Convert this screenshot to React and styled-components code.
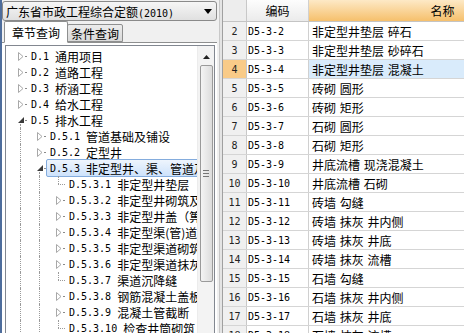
import React from "react";
import styled, { createGlobalStyle, css } from "styled-components";

const GlobalStyle = createGlobalStyle`
  html, body {
    margin: 0;
    padding: 0;
    width: 464px;
    height: 333px;
    overflow: hidden;
    background: #f0f0f0;
  }
  body {
    font-family: "Noto Sans CJK SC", "Noto Sans", sans-serif;
    font-size: 12px;
    color: #000;
  }
`;

const treeItems = [
  { code: "D.1", name: "通用项目", level: 0, state: "closed" },
  { code: "D.2", name: "道路工程", level: 0, state: "closed" },
  { code: "D.3", name: "桥涵工程", level: 0, state: "closed" },
  { code: "D.4", name: "给水工程", level: 0, state: "closed" },
  { code: "D.5", name: "排水工程", level: 0, state: "open" },
  { code: "D.5.1", name: "管道基础及铺设", level: 1, state: "closed" },
  { code: "D.5.2", name: "定型井", level: 1, state: "closed" },
  { code: "D.5.3", name: "非定型井、渠、管道及构筑物", level: 1, state: "open", selected: true },
  { code: "D.5.3.1", name: "非定型井垫层", level: 2, state: "leaf" },
  { code: "D.5.3.2", name: "非定型井砌筑及抹灰", level: 2, state: "closed" },
  { code: "D.5.3.3", name: "非定型井盖（箅）制作", level: 2, state: "closed" },
  { code: "D.5.3.4", name: "非定型渠(管)道基础", level: 2, state: "closed" },
  { code: "D.5.3.5", name: "非定型渠道砌筑", level: 2, state: "closed" },
  { code: "D.5.3.6", name: "非定型渠道抹灰", level: 2, state: "closed" },
  { code: "D.5.3.7", name: "渠道沉降缝", level: 2, state: "leaf" },
  { code: "D.5.3.8", name: "钢筋混凝土盖板", level: 2, state: "closed" },
  { code: "D.5.3.9", name: "混凝土管截断", level: 2, state: "closed" },
  { code: "D.5.3.10", name: "检查井筒砌筑", level: 2, state: "leaf" },
];

const rows = [
  [2, "D5-3-2", "非定型井垫层 碎石"],
  [3, "D5-3-3", "非定型井垫层 砂碎石"],
  [4, "D5-3-4", "非定型井垫层 混凝土"],
  [5, "D5-3-5", "砖砌 圆形"],
  [6, "D5-3-6", "砖砌 矩形"],
  [7, "D5-3-7", "石砌 圆形"],
  [8, "D5-3-8", "石砌 矩形"],
  [9, "D5-3-9", "井底流槽 现浇混凝土"],
  [10, "D5-3-10", "井底流槽 石砌"],
  [11, "D5-3-11", "砖墙 勾缝"],
  [12, "D5-3-12", "砖墙 抹灰 井内侧"],
  [13, "D5-3-13", "砖墙 抹灰 井底"],
  [14, "D5-3-14", "砖墙 抹灰 流槽"],
  [15, "D5-3-15", "石墙 勾缝"],
  [16, "D5-3-16", "石墙 抹灰 井内侧"],
  [17, "D5-3-17", "石墙 抹灰 井底"],
  [18, "D5-3-18", "石墙 抹灰 流槽"],
];

const ClosedArrow = () => (
  <svg width="6" height="9" viewBox="0 0 6 9">
    <polygon points="0.5,0.5 5,4.5 0.5,8.5" fill="#fff" stroke="#a8a8a8" />
  </svg>
);

const OpenArrow = () => (
  <svg width="6" height="6" viewBox="0 0 6 6">
    <polygon points="6,0 6,6 0,6" fill="#3a3a3a" />
  </svg>
);

const App = () => {
  return (
    <>
      <GlobalStyle />
      <Frame>
        <LeftPane>
          <Combo>
            <span>
              广东省市政工程综合定额<Code>(2010)</Code>
            </span>
            <ComboArrow>
              <svg width="8" height="5" viewBox="0 0 8 5">
                <polygon points="0,0 8,0 4,5" fill="#000" />
              </svg>
            </ComboArrow>
          </Combo>
          <TabStrip>
            <Tab $active>章节查询</Tab>
            <Tab>条件查询</Tab>
          </TabStrip>
          <TabPanel>
            <TreeBox>
              <TreeList>
                {treeItems.map((item) => (
                  <TreeRow key={item.code}>
                    {item.level > 0 && <Guide />}
                    {item.level > 1 && <Guide />}
                    <Expander $state={item.state}>
                      {item.state === "closed" && <ClosedArrow />}
                      {item.state === "open" && <OpenArrow />}
                      {item.state !== "leaf" && <Dot />}
                    </Expander>
                    <Label $selected={item.selected}>
                      <Code>{item.code}</Code>
                      <span>{item.name}</span>
                    </Label>
                  </TreeRow>
                ))}
              </TreeList>
              <ScrollBar>
                <ScrollButton>
                  <svg width="7" height="4" viewBox="0 0 7 4">
                    <polygon points="0,4 7,4 3.5,0" fill="#222" />
                  </svg>
                </ScrollButton>
                <Thumb>
                  <Grip />
                </Thumb>
              </ScrollBar>
            </TreeBox>
          </TabPanel>
        </LeftPane>
        <Splitter />
        <Grid>
          <GridRow $header>
            <NumCell $header />
            <CodeCell $header>编码</CodeCell>
            <NameCell $header>名称</NameCell>
          </GridRow>
          {rows.map(([num, code, name]) => (
            <GridRow key={num}>
              <NumCell $current={num === 4}>{num}</NumCell>
              <CodeCell>{code}</CodeCell>
              <NameCell $current={num === 4}>{name}</NameCell>
            </GridRow>
          ))}
        </Grid>
      </Frame>
    </>
  );
};

const Frame = styled.div`
  display: flex;
  width: 464px;
  height: 333px;
  overflow: hidden;
`;

const LeftPane = styled.div`
  width: 219px;
  flex: none;
  box-sizing: border-box;
  display: flex;
  flex-direction: column;
  border-left: 2px solid #4e6d9c;
  padding-right: 2px;
  background: #f0f0f0;
`;

const Combo = styled.div`
  margin-top: 1px;
  height: 20px;
  box-sizing: border-box;
  display: flex;
  align-items: center;
  justify-content: space-between;
  padding: 0 4px 0 3px;
  border: 1px solid #8a8a8a;
  border-radius: 3px;
  background: linear-gradient(#f6f6f6, #e0e0e0);
  white-space: nowrap;
`;

const ComboArrow = styled.span`
  display: flex;
  align-items: center;
`;

const TabStrip = styled.div`
  display: flex;
  align-items: flex-end;
  height: 22px;
  padding-left: 2px;
  margin-bottom: -1px;
  position: relative;
  z-index: 1;
`;

const Tab = styled.div`
  box-sizing: border-box;
  border: 1px solid #8e8f8f;
  border-radius: 2px 2px 0 0;
  display: flex;
  align-items: center;
  white-space: nowrap;
  ${({ $active }) =>
    $active
      ? css`
          height: 22px;
          padding: 0 7px;
          background: #fff;
          border-bottom-color: #fff;
        `
      : css`
          height: 18px;
          padding: 0 3px;
          margin-left: -1px;
          margin-bottom: 1px;
          background: linear-gradient(#ececec, #d9d9d9);
        `}
`;

const TabPanel = styled.div`
  flex: 1;
  display: flex;
  min-height: 0;
  border-top: 1px solid #8e8f8f;
  padding: 2px 2px 0 3px;
  background: #fff;
`;

const TreeBox = styled.div`
  flex: 1;
  display: flex;
  min-width: 0;
  border: 1px solid #828790;
  border-bottom: none;
  background: #fff;
`;

const TreeList = styled.div`
  flex: 1;
  min-width: 0;
  overflow: hidden;
  padding: 2px 0 0 10px;
`;

const TreeRow = styled.div`
  display: flex;
  align-items: stretch;
  height: 16px;
  white-space: nowrap;
`;

const Guide = styled.span`
  width: 19px;
  flex: none;
  position: relative;
  &::before {
    content: "";
    position: absolute;
    left: 4px;
    top: 0;
    bottom: 0;
    border-left: 1px dotted #9a9a9a;
  }
`;

const Expander = styled.span`
  width: 11px;
  flex: none;
  display: flex;
  align-items: center;
  padding-left: 2px;
  box-sizing: border-box;
  position: relative;
  ${({ $state }) =>
    $state === "leaf" &&
    css`
      &::before {
        content: "";
        position: absolute;
        left: 4px;
        top: 0;
        height: 8px;
        border-left: 1px dotted #9a9a9a;
      }
      &::after {
        content: "";
        position: absolute;
        left: 4px;
        right: 0;
        top: 8px;
        border-top: 1px dotted #9a9a9a;
      }
    `}
  ${({ $state }) =>
    $state === "open" &&
    css`
      &::after {
        content: "";
        position: absolute;
        left: 4px;
        top: 12px;
        bottom: 0;
        border-left: 1px dotted #9a9a9a;
      }
    `}
`;

const Dot = styled.span`
  width: 2px;
  height: 1px;
  margin-left: 1px;
  background: #8a8a8a;
`;

const Label = styled.span`
  display: flex;
  align-items: center;
  gap: 6px;
  padding: 0 3px;
  border: 1px solid transparent;
  border-radius: 2px;
  ${({ $selected }) =>
    $selected &&
    css`
      margin: -1px 0;
      background: linear-gradient(#eef5fd, #cde2fb);
      border-color: #84acdd;
    `}
`;

const Code = styled.span`
  font-family: "DejaVu Sans Mono", "Liberation Mono", monospace;
  font-size: 10px;
`;

const ScrollBar = styled.div`
  width: 16px;
  flex: none;
  display: flex;
  flex-direction: column;
  align-items: center;
  background: #f3f3f3;
  border-left: 1px solid #ececec;
`;

const ScrollButton = styled.div`
  height: 17px;
  width: 100%;
  display: flex;
  align-items: center;
  justify-content: center;
  padding-top: 4px;
  box-sizing: border-box;
`;

const Thumb = styled.div`
  margin-top: 2px;
  width: 13px;
  height: 217px;
  box-sizing: border-box;
  border: 1px solid #9a9a9a;
  border-radius: 2px;
  background: linear-gradient(90deg, #f4f4f4, #dcdcdc);
  display: flex;
  align-items: center;
  justify-content: center;
`;

const Grip = styled.span`
  width: 6px;
  height: 5px;
  border-top: 1px solid #777;
  border-bottom: 1px solid #777;
  position: relative;
  &::after {
    content: "";
    position: absolute;
    left: 0;
    right: 0;
    top: 2px;
    border-top: 1px solid #777;
  }
`;

const Splitter = styled.div`
  width: 3px;
  flex: none;
  background: #e4e4e4;
  border-left: 1px solid #c8c8c8;
  box-sizing: border-box;
`;

const Grid = styled.div`
  flex: 1;
  min-width: 0;
  overflow: hidden;
  background: #fff;
  border-left: 1px solid #a0a0a0;
`;

const GridRow = styled.div`
  display: grid;
  grid-template-columns: 24px 62px 268px;
  height: ${({ $header }) => ($header ? "22px" : "19px")};
  box-sizing: border-box;
  border-bottom: 1px solid #d5d5d5;
  ${({ $header }) => $header && css`border-bottom-color: #c4c4c4;`}
`;

const cellBase = css`
  display: flex;
  align-items: center;
  border-right: 1px solid #d0d0d0;
  white-space: nowrap;
  overflow: hidden;
`;

const NumCell = styled.div`
  ${cellBase}
  justify-content: center;
  font-family: "DejaVu Sans Mono", "Liberation Mono", monospace;
  font-size: 10px;
  color: #222;
  background: ${({ $current, $header }) =>
    $current ? "#f9cb88" : $header ? "#ededed" : "#f0f0f0"};
  border-right-color: #c8c8c8;
`;

const CodeCell = styled.div`
  ${cellBase}
  padding-left: 1px;
  font-family: "DejaVu Sans Mono", "Liberation Mono", monospace;
  font-size: 10px;
  ${({ $header }) =>
    $header &&
    css`
      justify-content: center;
      padding-left: 0;
      font-family: "Noto Sans CJK SC", sans-serif;
      font-size: 12px;
      background: linear-gradient(#fdfdfd, #ebebeb);
    `}
`;

const NameCell = styled.div`
  ${cellBase}
  padding-left: 3px;
  white-space: pre;
  word-spacing: 1px;
  background: ${({ $current }) => ($current ? "#d9ebfb" : "transparent")};
  ${({ $header }) =>
    $header &&
    css`
      justify-content: center;
      padding-left: 0;
      background: linear-gradient(#fde9c6, #f6c06c);
    `}
`;

export default App;
